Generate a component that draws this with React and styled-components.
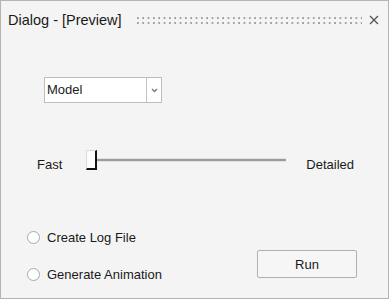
import React from 'react';
import styled, { createGlobalStyle } from 'styled-components';

const GlobalStyle = createGlobalStyle`
	html, body {
		margin: 0;
		padding: 0;
		background: #ffffff;
	}
	* {
		box-sizing: border-box;
	}
`;

const Window = styled.div`
	width: 389px;
	height: 299px;
	border: 1px solid #b4b4b4;
	background: #f4f4f4;
	display: flex;
	flex-direction: column;
	font-family: 'Liberation Sans', Arial, sans-serif;
	font-size: 13px;
	color: #1a1a1a;
`;

const TitleBar = styled.div`
	height: 38px;
	display: flex;
	align-items: center;
	padding: 0 9px 0 7px;
`;

const Title = styled.span`
	font-size: 14.5px;
	line-height: 18px;
	white-space: nowrap;
`;

const Grip = styled.div`
	flex: 1;
	height: 7px;
	margin: 0 7px 0 15px;
	background-image: linear-gradient(to bottom, transparent 2px, #f4f4f4 2px),
		linear-gradient(to right, #a2a2a2 2px, transparent 2px);
	background-size: 5.33px 5px, 5.33px 5px;
`;

const CloseButton = styled.span`
	display: flex;
	width: 10px;
	height: 10px;
	margin-top: -1px;
`;

const DropRow = styled.div`
	display: flex;
	margin-top: 38px;
	padding-left: 43px;
`;

const Select = styled.div`
	width: 118px;
	height: 26px;
	display: flex;
	border: 1px solid #bdbdbd;
	background: #ffffff;
`;

const SelectValue = styled.span`
	flex: 1;
	padding-left: 2px;
	line-height: 24px;
	font-size: 13px;
`;

const SelectArrow = styled.span`
	width: 15px;
	border-left: 1px solid #c4c4c4;
	display: flex;
	align-items: center;
	justify-content: center;
`;

const SliderRow = styled.div`
	display: flex;
	align-items: center;
	margin-top: 47px;
	padding-left: 36px;
	height: 20px;
`;

const SliderLabel = styled.span`
	margin-top: 10px;
	line-height: 16px;
	margin-right: ${(p) => p.$gap || 0}px;
	margin-left: ${(p) => p.$lead || 0}px;
`;

const Handle = styled.span`
	width: 11px;
	height: 20px;
	background: #fcfcfc;
	border-style: solid;
	border-width: 1px 2px 2px 1px;
	border-color: #dcdcdc #111 #111 #dcdcdc;
`;

const Track = styled.span`
	width: 189px;
	height: 2px;
	background: #9c9c9c;
	box-shadow: 0 1px 0 #e2e2e2, 0 -1px 0 #e2e2e2;
`;

const BottomRow = styled.div`
	display: flex;
	align-items: flex-start;
	margin-top: 57px;
	padding-left: 26px;
`;

const Options = styled.div`
	display: flex;
	flex-direction: column;
	gap: 17px;
`;

const Option = styled.label`
	display: flex;
	align-items: center;
	height: 20px;
	gap: 7px;
	white-space: nowrap;
`;

const Radio = styled.span`
	width: 13px;
	height: 13px;
	border-radius: 50%;
	border: 1px solid #a8a8a8;
	background: #ffffff;
`;

const RunButton = styled.button`
	margin: 23px 31px 0 auto;
	width: 100px;
	height: 28px;
	border: 1px solid #b0b0b0;
	border-radius: 2px;
	background: #f6f6f6;
	font-family: inherit;
	font-size: 13px;
	color: #1a1a1a;
	padding: 0;
`;

export default function App() {
	return (
		<React.Fragment>
			<GlobalStyle />
			<Window>
				<TitleBar>
					<Title>Dialog - [Preview]</Title>
					<Grip />
					<CloseButton>
						<svg width="10" height="10" viewBox="0 0 10 10">
							<path d="M1 1 L9 9 M9 1 L1 9" stroke="#555" strokeWidth="1.3" />
						</svg>
					</CloseButton>
				</TitleBar>
				<DropRow>
					<Select>
						<SelectValue>Model</SelectValue>
						<SelectArrow>
							<svg width="7" height="5" viewBox="0 0 7 5">
								<path d="M1 1 L3.5 3.5 L6 1" stroke="#777" strokeWidth="1.4" fill="none" />
							</svg>
						</SelectArrow>
					</Select>
				</DropRow>
				<SliderRow>
					<SliderLabel $gap={24}>Fast</SliderLabel>
					<Handle />
					<Track />
					<SliderLabel $lead={20}>Detailed</SliderLabel>
				</SliderRow>
				<BottomRow>
					<Options>
						<Option>
							<Radio />
							Create Log File
						</Option>
						<Option>
							<Radio />
							Generate Animation
						</Option>
					</Options>
					<RunButton>Run</RunButton>
				</BottomRow>
			</Window>
		</React.Fragment>
	);
}
